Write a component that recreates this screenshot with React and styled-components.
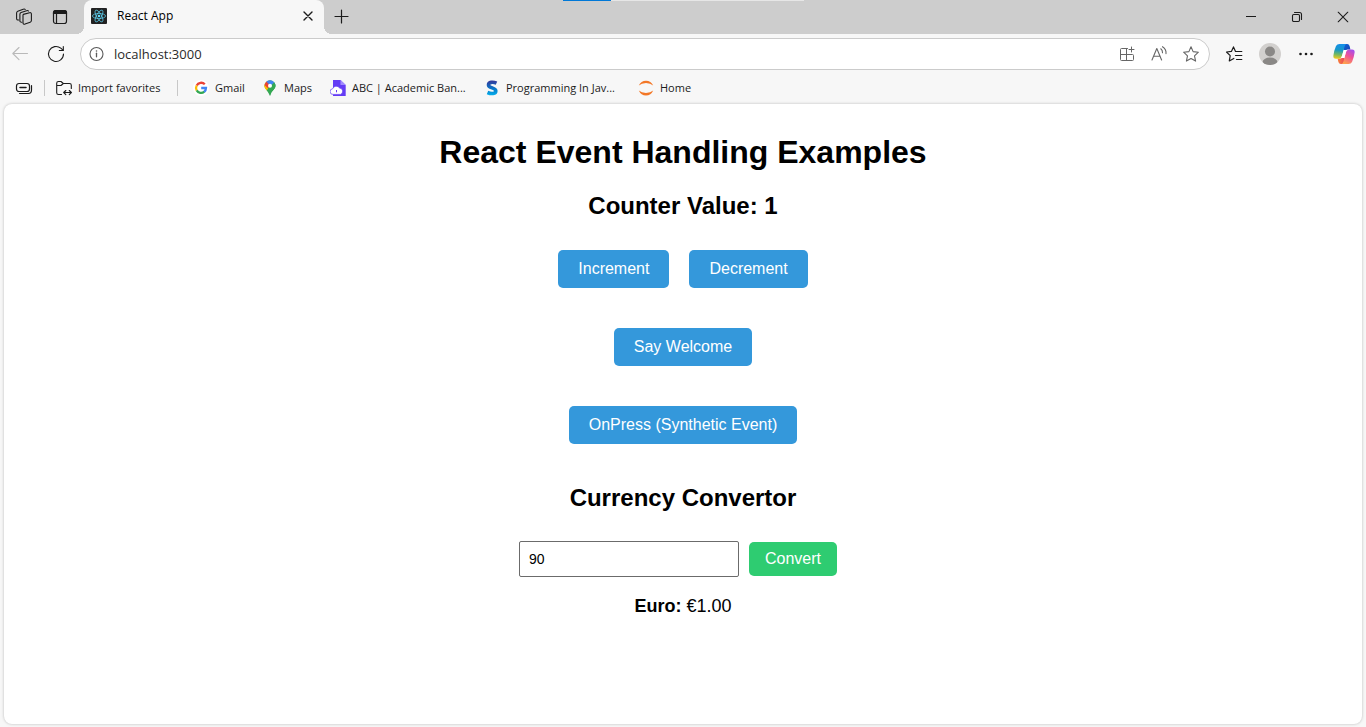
import React, { useState } from "react";
import styled, { createGlobalStyle } from "styled-components";

const GlobalStyle = createGlobalStyle`
  *, *::before, *::after { box-sizing: border-box; }
  body {
    margin: 0;
    background: #f7f7f7;
    font-family: "Open Sans", "Noto Sans", sans-serif;
    color: #1b1b1b;
  }
  svg { display: block; flex: none; }
`;

const Browser = styled.div`
  display: flex;
  flex-direction: column;
  min-height: 100vh;
`;

const TabStrip = styled.header`
  position: relative;
  display: flex;
  align-items: center;
  height: 34px;
  padding-left: 6px;
  background: #cdcdcd;
`;

const LoadingBar = styled.div`
  position: absolute;
  top: 0;
  left: 0;
  right: 0;
  width: 241px;
  height: 1px;
  margin: 0 auto;
  background: linear-gradient(to right, #0078d7 20%, #e6e6e6 20%);
`;

const IconButton = styled.button`
  display: flex;
  align-items: center;
  justify-content: center;
  flex: none;
  width: ${(p) => p.$width || 36}px;
  height: 32px;
  padding: 0;
  border: 0;
  background: none;
  color: ${(p) => p.$color || "#1b1b1b"};
`;

const Tab = styled.div`
  position: relative;
  display: flex;
  align-items: center;
  width: 240px;
  height: 34px;
  margin-left: 6px;
  padding: 0 0 2px 7px;
  border-radius: 8px 8px 0 0;
  background: #f7f7f7;
  font-size: 12px;

  &::before,
  &::after {
    content: "";
    position: absolute;
    bottom: 0;
    width: 8px;
    height: 8px;
  }
  &::before {
    right: 100%;
    background: radial-gradient(circle at 0 0, transparent 8px, #f7f7f7 8px);
  }
  &::after {
    left: 100%;
    background: radial-gradient(circle at 100% 0, transparent 8px, #f7f7f7 8px);
  }
`;

const TabTitle = styled.span`
  flex: 1;
  margin-left: 10px;
  line-height: 16px;
  color: #000;
`;

const WindowControls = styled.div`
  display: flex;
  margin-left: auto;
`;

const Toolbar = styled.nav`
  display: flex;
  align-items: center;
  height: 40px;
  padding: 0 4px 0 2px;
`;

const AddressBar = styled.div`
  display: flex;
  align-items: center;
  flex: 1;
  height: 32px;
  margin: 0 6px;
  padding: 0 2px 0 0;
  border: 1px solid #cbcbcb;
  border-radius: 16px;
  background: #fff;
`;

const AddressInput = styled.input`
  flex: 1;
  min-width: 0;
  padding: 0 0 0 1px;
  border: 0;
  outline: 0;
  background: none;
  font: 13px/20px "Open Sans", "Noto Sans", sans-serif;
  color: #2b2b2b;
`;

const CopilotSlot = styled.div`
  margin-left: 2px;
`;

const FavoritesBar = styled.nav`
  display: flex;
  align-items: center;
  height: 28px;
  padding-left: 6px;
  margin-bottom: 2px;
  font-size: 11px;
`;

const Divider = styled.span`
  width: 1px;
  height: 16px;
  margin: 0 ${(p) => p.$after}px 0 2px;
  background: #c8c8c8;
`;

const Favorite = styled.a`
  display: flex;
  align-items: center;
  gap: 6px;
  width: ${(p) => p.$width}px;
  line-height: 16px;
  white-space: nowrap;
  color: inherit;
  text-decoration: none;
`;

const Page = styled.main`
  flex: 1;
  display: flex;
  flex-direction: column;
  align-items: center;
  margin: 0 4px 3px;
  padding: 30px 0 60px;
  border-radius: 8px;
  background: #fff;
  box-shadow: 0 0 3px rgba(0, 0, 0, 0.25);
  font-family: "Liberation Sans", Arial, sans-serif;
  color: #000;
`;

const Title = styled.h1`
  margin: 0 0 22px;
  font-size: 32px;
  line-height: 36px;
`;

const Subtitle = styled.h2`
  margin: 0;
  font-size: 24px;
  line-height: 28px;
`;

const ButtonRow = styled.div`
  display: flex;
  justify-content: center;
  gap: 20px;
  margin-top: ${(p) => p.$top}px;
`;

const ActionButton = styled.button`
  height: 38px;
  padding: 0 20px;
  border: 0;
  border-radius: 5px;
  background: #3498db;
  font: 16px/18px "Liberation Sans", Arial, sans-serif;
  color: #fff;
  cursor: pointer;
`;

const ConvertButton = styled(ActionButton)`
  height: 34px;
  padding: 0 16px;
  background: #2ecc71;
`;

const Converter = styled.form`
  display: flex;
  align-items: center;
  gap: 10px;
  margin-top: 29px;
  padding-right: 10px;
`;

const AmountInput = styled.input`
  width: 220px;
  height: 36px;
  padding: 8px 9px;
  border: 1px solid #6b6b6b;
  border-radius: 2px;
  background: #fff;
  font: 14px/16px "Liberation Sans", Arial, sans-serif;
  color: #000;
`;

const Result = styled.p`
  margin: 18px 0 0;
  font-size: 18px;
  line-height: 22px;
`;

const line = { fill: "none", stroke: "currentColor", strokeLinecap: "round", strokeLinejoin: "round" };

const WorkspacesIcon = () => (
  <svg width="18" height="18" viewBox="0 0 18 18" {...line} strokeWidth="1.1">
    <path d="M8.3 6.4 14.6 4.7Q16.4 4.4 16.4 6V12.6Q16.4 13.8 15.2 14.2L10 16.1Q8.2 16.6 8 15V7.6Q8 6.6 8.3 6.4Z" />
    <path d="M6.8 14.2Q4.9 14.3 4.9 12.8V6.2Q4.9 5 6.1 4.6L11.6 2.7Q13 2.3 13.4 3.1" />
    <path d="M3.7 12Q1.6 12.2 1.6 10.500V5Q1.6 3.7 2.8 3.2L8.2 1.2Q9.7.8 10.2 1.500" />
  </svg>
);

const VerticalTabsIcon = () => (
  <svg width="16" height="16" viewBox="0 0 16 16" {...line} strokeWidth="1.2">
    <rect x="1.5" y="1.5" width="13" height="13" rx="2.2" />
    <path d="M1.5 4.5V3.7Q1.5 1.5 3.7 1.5H12.3Q14.5 1.5 14.5 3.7V4.5Z" fill="currentColor" />
    <path d="M4.5 5V14.5" />
  </svg>
);

const ReactIcon = () => (
  <svg width="16" height="16" viewBox="0 0 16 16" fill="none" stroke="#61dafb" strokeWidth=".75" strokeOpacity=".9">
    <rect width="16" height="16" rx="1" fill="#222" stroke="none" />
    <ellipse cx="8" cy="8" rx="6.6" ry="2.5" />
    <ellipse cx="8" cy="8" rx="6.6" ry="2.5" transform="rotate(60 8 8)" />
    <ellipse cx="8" cy="8" rx="6.6" ry="2.5" transform="rotate(120 8 8)" />
    <circle cx="8" cy="8" r="1.3" fill="#61dafb" stroke="none" />
  </svg>
);

const CrossIcon = ({ size = 10, weight = 1.4 }) => (
  <svg width={size} height={size} viewBox="0 0 10 10" {...line} strokeWidth={weight}>
    <path d="m1 1 8 8M9 1 1 9" />
  </svg>
);

const PlusIcon = () => (
  <svg width="16" height="16" viewBox="0 0 16 16" {...line} strokeWidth="1.2">
    <path d="M7.5 1v13M1 7.5h13" />
  </svg>
);

const MinimizeIcon = () => (
  <svg width="10" height="10" viewBox="0 0 10 10" stroke="currentColor">
    <path d="M0 4.5h10" />
  </svg>
);

const RestoreIcon = () => (
  <svg width="12" height="12" viewBox="0 0 12 12" {...line} strokeWidth="1.1">
    <rect x="1.5" y="3.5" width="7" height="7" rx="1.2" />
    <path d="M3.5 1.5H8.5Q10.5 1.5 10.5 3.5V8.5" />
  </svg>
);

const BackIcon = () => (
  <svg width="18" height="16" viewBox="0 0 18 16" {...line} strokeWidth="1.1">
    <path d="M16.5 7.5H1.8M8 1.5 1.8 7.5 8 13.7" />
  </svg>
);

const ReloadIcon = () => (
  <svg width="18" height="18" viewBox="0 0 18 18" {...line} strokeWidth="1.1">
    <path d="M16.5 9A7.5 7.5 0 1 1 13.8 3.2L16 5.2" />
    <path d="M16.3 1.5V5.5H12.3" />
  </svg>
);

const InfoIcon = () => (
  <svg width="16" height="16" viewBox="0 0 16 16" {...line} strokeWidth="1.1">
    <circle cx="7.5" cy="8" r="6.5" />
    <path d="M7.5 7.2v3.6" strokeWidth="1.3" />
    <circle cx="7.5" cy="5" r=".8" fill="currentColor" stroke="none" />
  </svg>
);

const AppsIcon = () => (
  <svg width="16" height="16" viewBox="0 0 16 16" {...line} strokeWidth="1">
    <path d="M8.5 2.5H2.5Q1.5 2.5 1.5 3.5V13.5Q1.5 14.5 2.5 14.5H13.5Q14.5 14.5 14.5 13.5V9.5Q14.5 8.5 13.5 8.5H1.5M7.5 2.5V14.5M12.5 1v5M10 3.5h5" />
  </svg>
);

const ReadAloudIcon = () => (
  <svg width="18" height="18" viewBox="0 0 18 18" {...line} strokeWidth="1.1">
    <path d="M2 15 6.8 3.5 11.6 15M3.7 11.2H10" />
    <path d="M10.800 3.800Q12.700 5.200 12.500 7.800M12.500 1.700Q16.500 4.200 16 8.600" />
  </svg>
);

const StarIcon = () => (
  <svg width="18" height="18" viewBox="0 0 18 18" {...line} strokeWidth="1.1">
    <path d="m9 1.8 2.1 4.8 5.3.6-3.9 3.6 1.1 5.3L9 13.5l-4.6 2.6 1.1-5.3-3.9-3.6 5.3-.6Z" />
  </svg>
);

const CollectionsIcon = () => (
  <svg width="18" height="18" viewBox="0 0 18 18" {...line} strokeWidth="1.2">
    <path d="M10.5 6.5 8.5 1.9 6.4 6.4 1.5 7 5.2 10.6 4.3 15.9 8.8 13.4M11 6.5h5.8M10.5 10.5h6.3M11.5 14.5h5.3" />
  </svg>
);

const AvatarIcon = () => (
  <svg width="22" height="22" viewBox="0 0 22 22">
    <clipPath id="avatar-clip"><circle cx="11" cy="11" r="11" /></clipPath>
    <g clipPath="url(#avatar-clip)">
      <rect width="22" height="22" fill="#d2d0ce" />
      <circle cx="11" cy="8.5" r="5" fill="#8a8886" />
      <ellipse cx="11" cy="19.5" rx="7.5" ry="5" fill="#8a8886" />
    </g>
  </svg>
);

const MoreIcon = () => (
  <svg width="16" height="16" viewBox="0 0 16 16" fill="currentColor">
    <circle cx="2.5" cy="8" r="1.3" />
    <circle cx="8" cy="8" r="1.3" />
    <circle cx="13.5" cy="8" r="1.3" />
  </svg>
);

const CopilotIcon = () => (
  <svg width="22" height="22" viewBox="0 0 22 22">
    <defs>
      <linearGradient id="cp-left" x1=".4" y1="0" x2=".3" y2="1">
        <stop offset="0" stopColor="#1690ea" />
        <stop offset=".4" stopColor="#1798c8" />
        <stop offset=".7" stopColor="#6fb765" />
        <stop offset="1" stopColor="#f2cb1d" />
      </linearGradient>
      <linearGradient id="cp-right" x1=".8" y1="0" x2=".3" y2="1">
        <stop offset="0" stopColor="#a34df0" />
        <stop offset=".45" stopColor="#ee5098" />
        <stop offset="1" stopColor="#ffa44c" />
      </linearGradient>
      <linearGradient id="cp-top" x1="0" y1="0" x2="1" y2="1">
        <stop offset="0" stopColor="#1263d6" />
        <stop offset="1" stopColor="#1747b5" />
      </linearGradient>
      <linearGradient id="cp-bottom" x1="0" y1="0" x2="1" y2="0">
        <stop offset="0" stopColor="#f9853a" />
        <stop offset="1" stopColor="#e8415c" />
      </linearGradient>
    </defs>
    <path d="M10 1H14.2Q16 1 16.6 3L17.4 6.500H14.5Q12.8 6.500 12.200 8L10.500 7Z" fill="url(#cp-top)" />
    <path d="M12 21H7.8Q6 21 5.4 19L4.6 15.500H7.500Q9.200 15.500 9.800 13.500L11.500 15Z" fill="url(#cp-bottom)" />
    <path d="M6.500 1H13.500Q12.200 1.300 11.500 3.800L9 12.800Q8.200 15.700 5.700 15.700H3Q0 15.700.4 12.500Q1 7.500 3 3Q4 1 6.500 1Z" fill="url(#cp-left)" />
    <path d="M15.500 21H8.500Q9.800 20.700 10.500 18.200L13 9Q13.800 6.500 16.300 6.500H19Q22 6.500 21.600 9.500Q21 14.500 19 19Q18 21 15.500 21Z" fill="url(#cp-right)" />
    <path d="M10.800 7H13.400L11.300 15H8.400Z" fill="#fff" />
  </svg>
);

const FavoritesPanelIcon = () => (
  <svg width="18" height="14" viewBox="0 0 18 14" {...line} strokeWidth="1.2">
    <rect x="1.5" y="2.5" width="13" height="8" rx="2.5" />
    <path d="M5 6.500h6" strokeWidth="1.5" />
    <path d="M16.5 4.500V9Q16.5 12.500 13.500 12.500H4.500" />
  </svg>
);

const ImportFolderIcon = () => (
  <svg width="16" height="16" viewBox="0 0 16 16" {...line} strokeWidth="1.1">
    <path d="M5.5 14.5H2.5Q.7 14.5.7 12.7V3.3Q.7 1.5 2.5 1.5H5L7.3 3.5H13.5Q15.3 3.5 15.3 5.3V8.5M.7 5.5H5L7.3 3.5" />
    <path d="M8 12.5h7.3M9.8 10.5 7.7 12.5l2.1 2.2M13.3 10.5l2.1 2-2.1 2.2" />
  </svg>
);

const GoogleIcon = () => (
  <svg width="16" height="16" viewBox="0 0 16 16" fill="none" strokeWidth="2.3">
    <circle cx="8" cy="8" r="8" fill="#fff" />
    <path d="M11.8 4.3A5 5 0 0 0 3.7 5.6" stroke="#ea4335" />
    <path d="M3.7 5.5A5 5 0 0 0 3.7 10.5" stroke="#fbbc05" />
    <path d="M3.7 10.4A5 5 0 0 0 11.3 11.7" stroke="#34a853" />
    <path d="M11.2 11.8A5 5 0 0 0 13 8H8.2" stroke="#4285f4" />
  </svg>
);

const MapsIcon = () => (
  <svg width="16" height="16" viewBox="0 0 16 16">
    <clipPath id="pin-clip"><path d="M8 .3A5.5 5.5 0 0 0 2.5 5.8C2.5 9.5 6.3 10.4 7.3 14.8Q8 16.7 8.7 14.8C9.7 10.4 13.5 9.5 13.5 5.8A5.5 5.5 0 0 0 8 .3Z" /></clipPath>
    <g clipPath="url(#pin-clip)">
      <rect width="16" height="16" fill="#34a853" />
      <path d="M0 4 3.8 2.3 8 5.8 2 13H0Z" fill="#fbbc04" />
      <path d="M0 0H5L8 5.8 5.8 8.2 2 5Z" fill="#ea4335" />
      <path d="M4.2 1.5 5 0H16V3L11 8Z" fill="#4285f4" />
      <path d="m12.3 2 3.7 0v4l-9.7 9-2-4Z" fill="#34a853" />
      <path d="M0 4.500 2.500 5 6 8.500 4 12H0Z" fill="#fbbc04" />
    </g>
    <circle cx="8" cy="5.8" r="2" fill="#fff" />
  </svg>
);

const AcademicIcon = () => (
  <svg width="16" height="16" viewBox="0 0 16 16">
    <path d="M3 0H10.5L15.7 5V16H3Z" fill="#643cf5" />
    <path d="M10.5 0V5H15.7Z" fill="#a18bff" />
    <path d="M3.2 14.4A2.8 2.8 0 0 1 2.6 8.800 3.900 3.900 0 0 1 9.600 8 3.300 3.300 0 0 1 10.500 14.400Z" fill="#fff" stroke="#643cf5" strokeWidth=".7" />
    <path d="M6.500 12.300V10" fill="none" stroke="#643cf5" strokeWidth="1" />
  </svg>
);

const ScalerIcon = () => (
  <svg width="16" height="16" viewBox="0 0 16 16">
    <defs>
      <linearGradient id="s-fill" x1="0" y1="0" x2="0" y2="16" gradientUnits="userSpaceOnUse">
        <stop offset=".1" stopColor="#303f9f" />
        <stop offset=".55" stopColor="#0878c9" />
        <stop offset="1" stopColor="#05b5ef" />
      </linearGradient>
    </defs>
    <path d="M12.5 3.2C9 1.6 4.5 2 4.5 5c0 3.4 7.3 2.4 7.3 5.9 0 3-4.5 3.3-8.3 1.6" fill="none" stroke="url(#s-fill)" strokeWidth="3.6" />
  </svg>
);

const JupyterIcon = () => (
  <svg width="16" height="16" viewBox="0 0 16 16" fill="#f37726">
    <path d="M.8 5.5Q3 .7 8 .7T15.2 5.5Q12.5 3 8 3T.8 5.5Z" />
    <path d="M.8 10.5Q3 15.5 8 15.5T15.2 10.5Q12.5 12.9 8 12.9T.8 10.5Z" />
  </svg>
);

const favorites = [
  { label: "Gmail", Icon: GoogleIcon, width: 69 },
  { label: "Maps", Icon: MapsIcon, width: 68 },
  { label: "ABC | Academic Ban...", Icon: AcademicIcon, width: 154 },
  { label: "Programming In Jav...", Icon: ScalerIcon, width: 154 },
  { label: "Home", Icon: JupyterIcon, width: 60 },
];

export default function App() {
  const [count, setCount] = useState(1);
  const [amount, setAmount] = useState("90");
  const [euro, setEuro] = useState(1);

  const convert = (event) => {
    event.preventDefault();
    setEuro(Number(amount) / 90);
  };

  return (
    <>
      <GlobalStyle />
      <Browser>
        <TabStrip>
          <IconButton aria-label="Workspaces"><WorkspacesIcon /></IconButton>
          <IconButton aria-label="Tab actions"><VerticalTabsIcon /></IconButton>
          <Tab>
            <ReactIcon />
            <TabTitle>React App</TabTitle>
            <IconButton $width={32} aria-label="Close tab"><CrossIcon /></IconButton>
          </Tab>
          <IconButton aria-label="New tab"><PlusIcon /></IconButton>
          <WindowControls>
            <IconButton $width={46} aria-label="Minimize"><MinimizeIcon /></IconButton>
            <IconButton $width={46} aria-label="Restore"><RestoreIcon /></IconButton>
            <IconButton $width={46} aria-label="Close"><CrossIcon size={12} weight={0.9} /></IconButton>
          </WindowControls>
          <LoadingBar />
        </TabStrip>

        <Toolbar>
          <IconButton $color="#b9b9b9" aria-label="Back"><BackIcon /></IconButton>
          <IconButton aria-label="Refresh"><ReloadIcon /></IconButton>
          <AddressBar>
            <IconButton $width={32} $color="#5a5a5a" aria-label="Site information"><InfoIcon /></IconButton>
            <AddressInput aria-label="Address" defaultValue="localhost:3000" />
            <IconButton $width={32} $color="#666" aria-label="App available"><AppsIcon /></IconButton>
            <IconButton $width={32} $color="#666" aria-label="Read aloud"><ReadAloudIcon /></IconButton>
            <IconButton $width={32} $color="#666" aria-label="Add to favorites"><StarIcon /></IconButton>
          </AddressBar>
          <IconButton aria-label="Favorites"><CollectionsIcon /></IconButton>
          <IconButton aria-label="Profile"><AvatarIcon /></IconButton>
          <IconButton aria-label="Settings and more"><MoreIcon /></IconButton>
          <CopilotSlot>
            <IconButton aria-label="Copilot"><CopilotIcon /></IconButton>
          </CopilotSlot>
        </Toolbar>

        <FavoritesBar>
          <IconButton aria-label="Favorites panel"><FavoritesPanelIcon /></IconButton>
          <Divider $after={11} />
          <Favorite href="#import" $width={119}><ImportFolderIcon />Import favorites</Favorite>
          <Divider $after={15} />
          {favorites.map(({ label, Icon, width }) => (
            <Favorite key={label} href="#favorite" $width={width}><Icon />{label}</Favorite>
          ))}
        </FavoritesBar>

        <Page>
          <Title>React Event Handling Examples</Title>
          <Subtitle>Counter Value: {count}</Subtitle>
          <ButtonRow $top={30}>
            <ActionButton onClick={() => setCount(count + 1)}>Increment</ActionButton>
            <ActionButton onClick={() => setCount(count - 1)}>Decrement</ActionButton>
          </ButtonRow>
          <ButtonRow $top={40}>
            <ActionButton>Say Welcome</ActionButton>
          </ButtonRow>
          <ButtonRow $top={40}>
            <ActionButton>OnPress (Synthetic Event)</ActionButton>
          </ButtonRow>
          <ButtonRow $top={40}>
            <Subtitle>Currency Convertor</Subtitle>
          </ButtonRow>
          <Converter onSubmit={convert}>
            <AmountInput aria-label="Amount" value={amount} onChange={(e) => setAmount(e.target.value)} />
            <ConvertButton type="submit">Convert</ConvertButton>
          </Converter>
          <Result><strong>Euro:</strong> €{euro.toFixed(2)}</Result>
        </Page>
      </Browser>
    </>
  );
}
